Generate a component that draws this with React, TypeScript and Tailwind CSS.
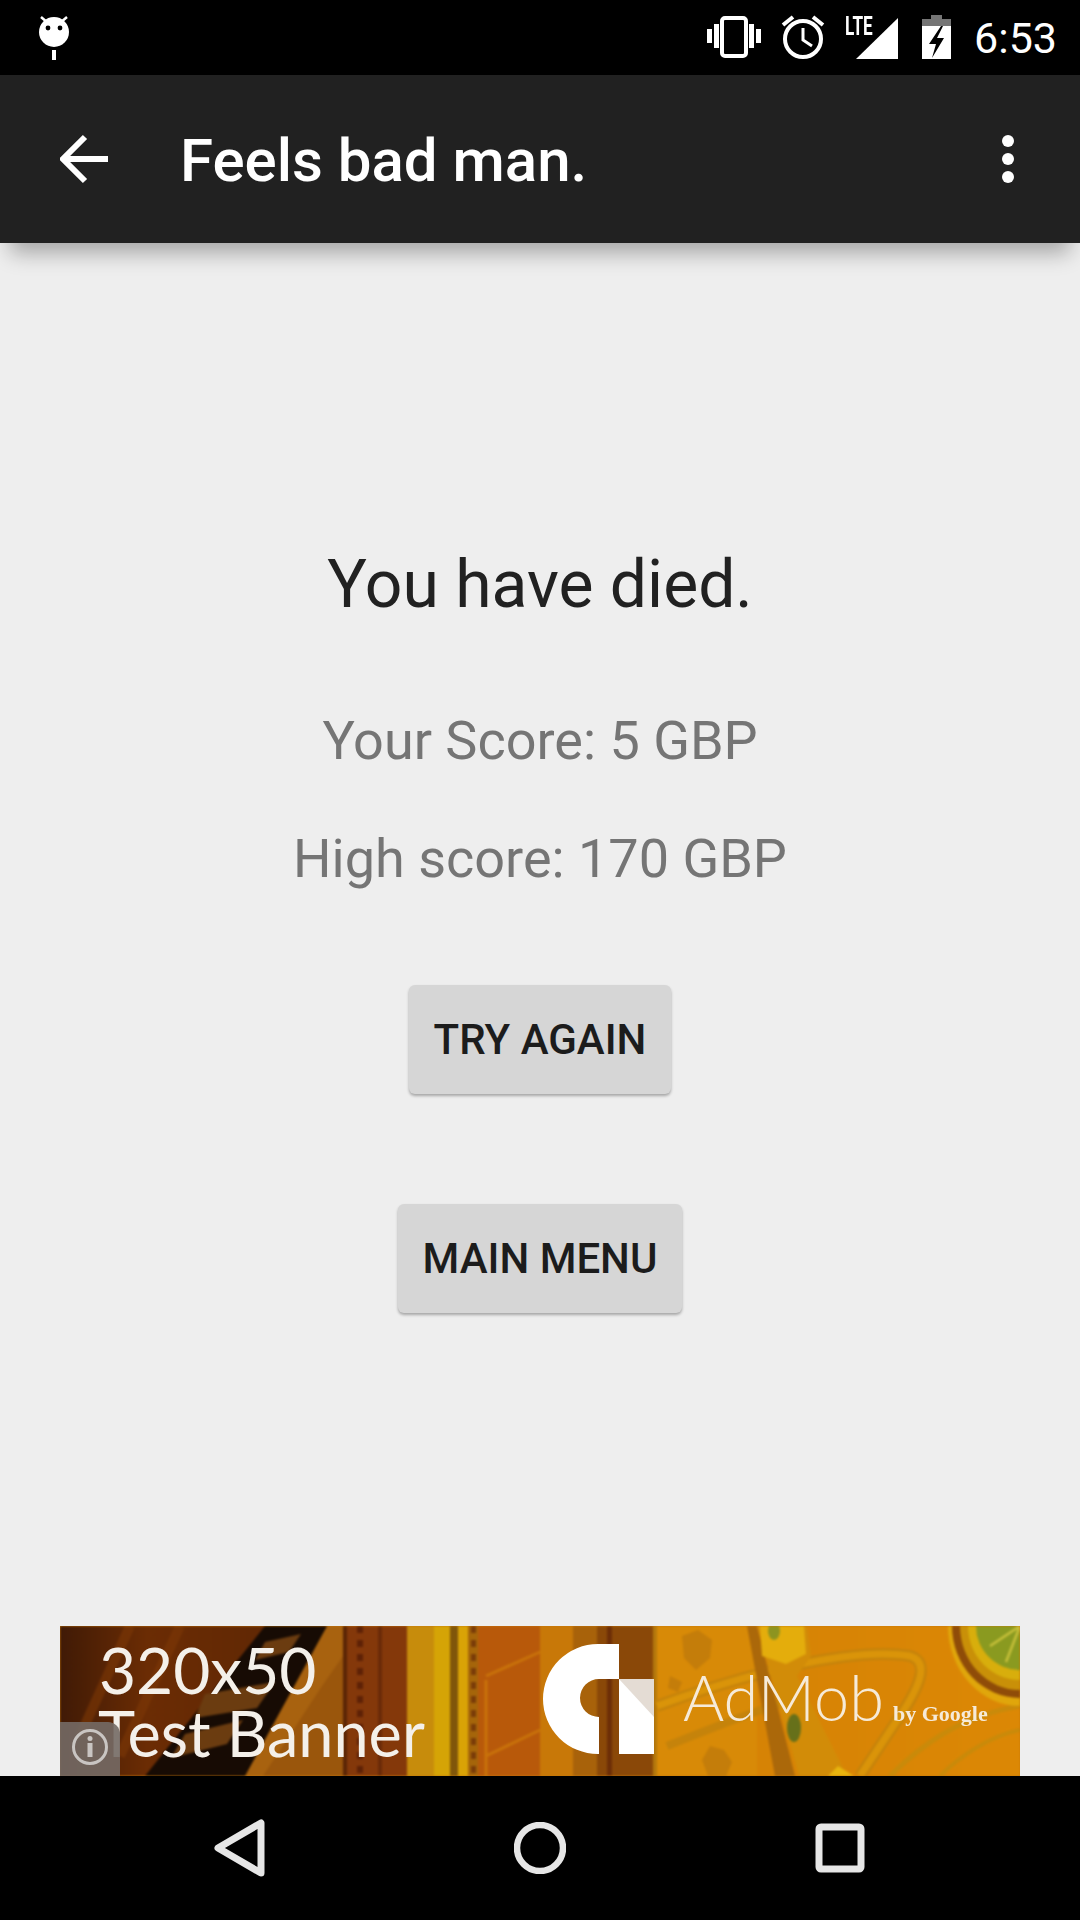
const roboto = "font-['Roboto',sans-serif]";

function StatusBar() {
  return (
    <div className="relative flex h-[75px] shrink-0 items-center justify-between bg-black pl-[36px] pr-[23px]">
      <svg width="36" height="48" viewBox="0 0 36 48" className="mt-[-2px] text-white" aria-hidden="true">
        <circle cx="18" cy="19" r="15" fill="currentColor" />
        <path d="M5 4l7 6M31 4l-7 6" stroke="currentColor" strokeWidth="2.5" />
        <rect x="16" y="37" width="4" height="10" fill="currentColor" />
        <circle cx="12" cy="15" r="2.4" fill="#000" />
        <circle cx="24" cy="15" r="2.4" fill="#000" />
      </svg>
      <div className="flex items-center">
        <svg width="54" height="42" viewBox="0 0 54 42" className="mt-[-1px] text-white" aria-hidden="true">
          <rect x="15" y="2" width="24" height="38" rx="3" fill="none" stroke="currentColor" strokeWidth="4" />
          <path d="M0 13h5v14H0zM7 8h5v24H7zM42 8h5v24h-5zM49 13h5v14h-5z" fill="currentColor" />
        </svg>
        <svg width="44" height="44" viewBox="0 0 44 44" className="ml-[20px] mt-[-1px] text-white" aria-hidden="true">
          <circle cx="22" cy="24" r="18" fill="none" stroke="currentColor" strokeWidth="4" />
          <path d="M22 13v12l9 6" fill="none" stroke="currentColor" strokeWidth="3" />
          <path d="M2 10l10-8M42 10L32 2" fill="none" stroke="currentColor" strokeWidth="4" />
        </svg>
        <div className="relative ml-[20px] h-[44px] w-[54px]">
          <span className={`absolute left-0 top-[-4px] origin-top-left scale-x-[0.66] text-[26px] font-bold leading-[28px] text-white ${roboto}`}>
            LTE
          </span>
          <svg width="54" height="44" viewBox="0 0 54 44" className="text-white" aria-hidden="true">
            <path d="M11 43L53 2v41z" fill="currentColor" />
          </svg>
        </div>
        <svg width="30" height="44" viewBox="0 0 30 44" className="ml-[23px] mt-[-1px]" aria-hidden="true">
          <path d="M0 8h29v36H0z" fill="#fff" />
          <path d="M9 0h11v4h9v7H0V4h9z" fill="#757575" />
          <path d="M19 11L7 29h7l-4 14 12-20h-7l6-12z" fill="#000" />
        </svg>
        <span className={`ml-[22px] text-[43px] leading-[50px] text-white ${roboto}`}>6:53</span>
      </div>
    </div>
  );
}

function Toolbar() {
  return (
    <div className="relative z-10 flex h-[168px] shrink-0 items-center bg-[#212121] pl-[60px] pr-[66px] shadow-[0_20px_20px_-10px_rgba(0,0,0,0.3)]">
      <svg width="50" height="50" viewBox="0 0 50 50" className="text-white" aria-hidden="true">
        <path d="M2 25h46M25 3L3 25l22 22" fill="none" stroke="currentColor" strokeWidth="6" />
      </svg>
      <h1 className={`ml-[70px] mt-[4px] flex-1 text-[60px] font-medium leading-[70px] text-white ${roboto}`}>Feels bad man.</h1>
      <div className="flex flex-col gap-[6px]">
        <span className="h-[12px] w-[12px] rounded-full bg-white" />
        <span className="h-[12px] w-[12px] rounded-full bg-white" />
        <span className="h-[12px] w-[12px] rounded-full bg-white" />
      </div>
    </div>
  );
}

function GrayButton({ label, width }: { label: string; width: string }) {
  return (
    <button
      type="button"
      className={`flex h-[109px] items-center justify-center rounded-[6px] bg-[#d6d6d6] text-[42px] font-medium text-[#1c1c1c] shadow-[0_2px_3px_rgba(0,0,0,0.3)] ${width} ${roboto}`}
    >
      {label}
    </button>
  );
}

function AdBanner() {
  return (
    <div className="relative h-[150px] w-[960px] shrink-0 overflow-hidden bg-[#c97a08]">
      <svg width="960" height="150" viewBox="0 0 960 150" className="absolute inset-0 blur-[1px]" aria-hidden="true">
        <defs>
          <linearGradient id="adLeft" x1="0" x2="1" y1="0" y2="0">
            <stop offset="0" stopColor="#401a06" />
            <stop offset="0.3" stopColor="#6b2c04" />
            <stop offset="1" stopColor="#5a2505" />
          </linearGradient>
          <linearGradient id="adRight" x1="0" x2="1" y1="0" y2="0">
            <stop offset="0" stopColor="#c87506" />
            <stop offset="1" stopColor="#dc8805" />
          </linearGradient>
          <pattern id="adDots" width="6" height="14" patternUnits="userSpaceOnUse">
            <rect width="6" height="7" fill="#5e2106" />
          </pattern>
        </defs>
        <rect width="960" height="150" fill="url(#adRight)" />
        {/* dark arch on the left */}
        <rect width="290" height="150" fill="url(#adLeft)" />
        <path d="M70 0l-50 110M120 0L60 130" stroke="#7d3806" strokeWidth="10" opacity="0.6" />
        <path d="M283 0v150H170L267 0z" fill="#a8620f" />
        <path d="M262 60l21-30v120h-80z" fill="#8e4c0b" opacity="0.55" />
        <path d="M205 0h62L185 150H85z" fill="#170b04" />
        <path d="M145 68l70-12-18 26-62 10zM125 108l58-14-16 24-56 14zM205 16l36-8-12 18-34 8z" fill="#6b3c10" />
        <rect x="287" y="0" width="60" height="150" fill="#84380a" />
        <rect x="297" y="0" width="6" height="150" fill="url(#adDots)" />
        <rect x="318" y="0" width="4" height="150" fill="#6a2a08" />
        {/* gold columns */}
        <rect x="347" y="0" width="27" height="150" fill="#c78c0c" />
        <rect x="374" y="0" width="16" height="150" fill="#d5a406" />
        <rect x="390" y="0" width="8" height="150" fill="#80560a" />
        <rect x="398" y="0" width="10" height="150" fill="#d9a306" />
        <rect x="408" y="0" width="10" height="150" fill="#a5650a" />
        <rect x="411" y="0" width="5" height="150" fill="url(#adDots)" opacity="0.6" />
        {/* panels */}
        <rect x="418" y="0" width="62" height="150" fill="#b8590a" />
        <path d="M426 50l54-24M426 54v96M426 130l54-26" fill="none" stroke="#c9720a" strokeWidth="3" />
        <rect x="480" y="0" width="33" height="150" fill="#c87808" />
        <rect x="513" y="0" width="24" height="150" fill="#a8620a" />
        <rect x="537" y="0" width="56" height="150" fill="#8a4808" />
        <rect x="547" y="0" width="5" height="150" fill="#6d2e07" />
        <rect x="593" y="0" width="4" height="150" fill="#b5790c" />
        <rect x="597" y="0" width="100" height="150" fill="#d88a07" />
        {/* ornaments */}
        <path d="M622 10l16-6 14 10-2 18-14 12-12-12z" fill="#c47d0a" />
        <path d="M650 120l14 4 8 12-6 14h-18l-6-16z" fill="#c47d0a" />
        <path d="M610 50l12 6-4 10-10-4z" fill="#c47d0a" />
        {/* curved bands */}
        <path d="M597 80C680 50 790 20 850 30c20 6 10 30-10 60l-40 60" fill="none" stroke="#c5830b" strokeWidth="12" />
        <path d="M597 80C680 50 790 20 850 30c20 6 10 30-10 60l-40 60" fill="none" stroke="#da9409" strokeWidth="7" />
        <path d="M607 120c50-20 100-40 140-50" fill="none" stroke="#c5830b" strokeWidth="8" />
        <path d="M830 150c30-30 70-60 130-70" fill="none" stroke="#c98a0a" strokeWidth="5" />
        <path d="M880 150c20-20 50-40 80-46" fill="none" stroke="#c98a0a" strokeWidth="4" />
        {/* yellow column */}
        <path d="M687 0h10l38 150h-20z" fill="#ab680a" />
        <path d="M697 0h50l4 30-14 20 50 100h-48z" fill="#d28c08" />
        <path d="M700 0h44l2 28-20 10-24-8z" fill="#e4ad0c" />
        <ellipse cx="714" cy="5" rx="6" ry="9" fill="#8d9420" />
        <ellipse cx="734" cy="102" rx="7" ry="14" fill="#66701a" />
        <path d="M768 150l10-10 16 10z" fill="#e8b40e" />
        {/* ring in the corner */}
        <ellipse cx="960" cy="0" rx="72" ry="80" fill="#e0a60b" />
        <ellipse cx="960" cy="0" rx="68" ry="72" fill="#8f4c08" />
        <ellipse cx="960" cy="0" rx="60" ry="64" fill="#c99008" />
        <ellipse cx="960" cy="0" rx="52" ry="54" fill="#d8ae0c" />
        <ellipse cx="960" cy="0" rx="44" ry="44" fill="#8a9a20" />
        <path d="M960 0l-30 20M960 0l-14 36" stroke="#c7c03a" strokeWidth="2.5" />
      </svg>
      {/* admob mark */}
      <svg width="960" height="150" viewBox="0 0 960 150" className="absolute inset-0" aria-hidden="true">
        <path d="M559 18h-21a55 55 0 0 0 0 110h1V91a19 19 0 0 1 0-38h20z" fill="#fff" />
        <path d="M559 53h35v75h-35z" fill="#fff" />
        <path d="M559 53h35v38z" fill="#e4dcd4" />
      </svg>
      <span className="absolute left-[39px] top-[8px] font-['Lato',sans-serif] text-[64px] leading-[72px] text-[#f4f0ea] blur-[0.4px]">320x50</span>
      <span className="absolute left-[38px] top-[71px] font-['Lato',sans-serif] text-[63px] leading-[72px] text-[#f4f0ea] blur-[0.4px]">Test Banner</span>
      <span className="absolute left-[623px] top-[33px] font-['Lato',sans-serif] text-[63px] font-light leading-[76px] text-[#f6ead8] blur-[0.3px]">AdMob</span>
      <span className="absolute left-[833px] top-[73px] font-['Liberation_Serif',serif] text-[22px] font-bold leading-[30px] text-[#f6ead8] blur-[0.4px]">by Google</span>
      <div className="absolute bottom-0 left-0 flex h-[54px] w-[60px] items-start justify-center rounded-tr-[12px] bg-[#746a65]/90 pt-[6px]">
        <svg width="38" height="38" viewBox="0 0 38 38" className="text-[#c9c5c2]" aria-hidden="true">
          <circle cx="19" cy="19" r="16.5" fill="none" stroke="currentColor" strokeWidth="3" />
          <circle cx="19" cy="10.5" r="2.5" fill="currentColor" />
          <rect x="16.5" y="15" width="5" height="14" fill="currentColor" />
        </svg>
      </div>
    </div>
  );
}

function NavBar() {
  return (
    <div className="flex h-[144px] shrink-0 items-center bg-black pl-[214px] pr-[215px] text-[#e6e6e6]">
      <svg width="52" height="58" viewBox="0 0 52 58" aria-hidden="true">
        <path d="M47 4v50L4 29z" fill="none" stroke="currentColor" strokeWidth="7" strokeLinejoin="round" />
      </svg>
      <svg width="52" height="52" viewBox="0 0 52 52" className="ml-[248px]" aria-hidden="true">
        <circle cx="26" cy="26" r="23" fill="none" stroke="currentColor" strokeWidth="6.5" />
      </svg>
      <svg width="50" height="50" viewBox="0 0 50 50" className="ml-auto" aria-hidden="true">
        <rect x="4" y="4" width="42" height="42" rx="2" fill="none" stroke="currentColor" strokeWidth="7" />
      </svg>
    </div>
  );
}

export default function App() {
  return (
    <div className={`flex h-[1920px] w-[1080px] flex-col overflow-hidden bg-[#eeeeee] ${roboto}`}>
      <StatusBar />
      <Toolbar />
      <main className="flex flex-1 flex-col items-center pt-[304px]">
        <p className="text-[66px] leading-[76px] text-[#212121]">You have died.</p>
        <p className="mt-[86px] text-[54px] leading-[64px] text-[#757575]">Your Score: 5 GBP</p>
        <p className="mt-[54px] text-[54px] leading-[64px] text-[#757575]">High score: 170 GBP</p>
        <div className="mt-[94px]">
          <GrayButton label="TRY AGAIN" width="w-[262px]" />
        </div>
        <div className="mt-[110px]">
          <GrayButton label="MAIN MENU" width="w-[284px]" />
        </div>
        <div className="mt-auto">
          <AdBanner />
        </div>
      </main>
      <NavBar />
    </div>
  );
}
